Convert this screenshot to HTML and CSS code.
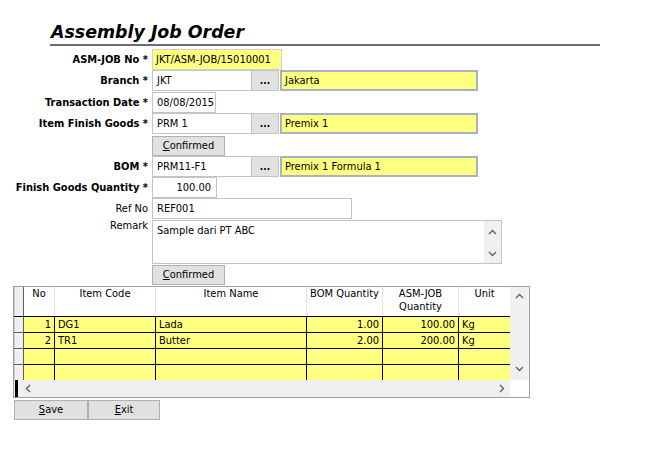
FILE: index.html
```html
<!DOCTYPE html>
<html>
<head>
<meta charset="utf-8">
<link rel="stylesheet" href="styles.css">
</head>
<body>
<div class="page">
  <h1 class="title">Assembly Job Order</h1>
  <div class="form">
    <div class="row">
      <label class="lbl req">ASM-JOB No *</label>
      <div class="in yellow plain w130">JKT/ASM-JOB/15010001</div>
    </div>
    <div class="row">
      <label class="lbl req">Branch *</label>
      <div class="in w100">JKT</div>
      <div class="dots">...</div>
      <div class="in ro w198">Jakarta</div>
    </div>
    <div class="row">
      <label class="lbl req">Transaction Date *</label>
      <div class="in w64">08/08/2015</div>
    </div>
    <div class="row">
      <label class="lbl req">Item Finish Goods *</label>
      <div class="in w100">PRM 1</div>
      <div class="dots">...</div>
      <div class="in ro w198">Premix 1</div>
    </div>
    <div class="row short">
      <span class="lbl"></span>
      <div class="btn w73"><u>C</u>onfirmed</div>
    </div>
    <div class="row">
      <label class="lbl req">BOM *</label>
      <div class="in w100">PRM11-F1</div>
      <div class="dots">...</div>
      <div class="in ro w198">Premix 1 Formula 1</div>
    </div>
    <div class="row">
      <label class="lbl req">Finish Goods Quantity *</label>
      <div class="in w65 num">100.00</div>
    </div>
    <div class="row">
      <label class="lbl">Ref No</label>
      <div class="in w200">REF001</div>
    </div>
    <div class="row top">
      <label class="lbl">Remark</label>
      <div class="area">
        <div class="area-text">Sample dari PT ABC</div>
        <div class="area-bar">
          <svg width="9" height="6" viewBox="0 0 9 6"><path d="M1 5 L4.5 1.5 L8 5" fill="none" stroke="#606060" stroke-width="1.4"/></svg>
          <svg width="9" height="6" viewBox="0 0 9 6"><path d="M1 1 L4.5 4.5 L8 1" fill="none" stroke="#606060" stroke-width="1.4"/></svg>
        </div>
      </div>
    </div>
    <div class="row">
      <span class="lbl"></span>
      <div class="btn w73"><u>C</u>onfirmed</div>
    </div>
  </div>

  <div class="grid">
    <div class="grid-body">
      <table class="tbl">
        <colgroup>
          <col style="width:9px"><col style="width:31px"><col style="width:101px"><col style="width:151px"><col style="width:76px"><col style="width:76px"><col style="width:52px">
        </colgroup>
        <thead>
          <tr><th class="ind"></th><th>No</th><th>Item Code</th><th>Item Name</th><th>BOM Quantity</th><th>ASM-JOB<br>Quantity</th><th>Unit</th></tr>
        </thead>
        <tbody>
          <tr><td class="ind"></td><td class="r">1</td><td>DG1</td><td>Lada</td><td class="r">1.00</td><td class="r">100.00</td><td>Kg</td></tr>
          <tr><td class="ind"></td><td class="r">2</td><td>TR1</td><td>Butter</td><td class="r">2.00</td><td class="r">200.00</td><td>Kg</td></tr>
          <tr><td class="ind"></td><td></td><td></td><td></td><td></td><td></td><td></td></tr>
          <tr><td class="ind"></td><td></td><td></td><td></td><td></td><td></td><td></td></tr>
        </tbody>
      </table>
    </div>
    <div class="vbar">
      <svg width="9" height="6" viewBox="0 0 9 6"><path d="M1 5 L4.5 1.5 L8 5" fill="none" stroke="#606060" stroke-width="1.4"/></svg>
      <svg width="9" height="6" viewBox="0 0 9 6"><path d="M1 1 L4.5 4.5 L8 1" fill="none" stroke="#606060" stroke-width="1.4"/></svg>
    </div>
    <div class="hbar">
      <span class="blk"></span>
      <svg width="6" height="9" viewBox="0 0 6 9"><path d="M5 1 L1.5 4.5 L5 8" fill="none" stroke="#606060" stroke-width="1.4"/></svg>
      <span class="fill"></span>
      <svg width="6" height="9" viewBox="0 0 6 9"><path d="M1 1 L4.5 4.5 L1 8" fill="none" stroke="#606060" stroke-width="1.4"/></svg>
    </div>
    <div class="corner"></div>
  </div>

  <div class="actions">
    <div class="btn w74"><u>S</u>ave</div>
    <div class="btn w72"><u>E</u>xit</div>
  </div>
</div>
</body>
</html>
```

FILE: styles.css
```css
html, body {
  margin: 0;
  padding: 0;
  background: #ffffff;
}
body {
  font-family: "DejaVu Sans Condensed", "DejaVu Sans", sans-serif;
  font-size: 11px;
  color: #000;
}
.page {
  padding-top: 20px;
}
.title {
  margin: 0 0 0 50px;
  width: 550px;
  font-family: "DejaVu Sans", sans-serif;
  font-weight: bold;
  font-style: italic;
  font-size: 17.4px;
  line-height: 24px;
  height: 26px;
  border-bottom: 2px solid #6d6d6d;
  box-sizing: border-box;
  padding-left: 1px;
}
.form {
  margin-top: 3px;
}
.row {
  display: flex;
  align-items: center;
  height: 21px;
  margin-bottom: 0.4px;
}
.row.short {
  height: 20px;
  margin-bottom: 0;
  align-items: flex-start;
  padding-top: 1px;
  box-sizing: content-box;
}
.row.top {
  align-items: flex-start;
  height: auto;
}
.lbl {
  width: 152px;
  flex: none;
  text-align: right;
  padding-right: 4px;
  box-sizing: border-box;
  line-height: 21px;
}
.lbl.req {
  font-weight: bold;
}
.row.top .lbl {
  line-height: 12px;
  padding-top: 0;
}
.in {
  height: 21px;
  box-sizing: border-box;
  border: 1px solid #c4c4c4;
  background: #fff;
  padding: 0 4px;
  line-height: 19px;
  white-space: nowrap;
  overflow: hidden;
  flex: none;
}
.in.yellow { background: #ffff80; border-color: #d0d0d0; padding-left: 3px; }
.in.ro {
  background: #ffff80;
  border: 2px solid #a6b0c8;
  line-height: 17px;
  padding-left: 3px;
  margin-left: 1px;
}
.in.num { text-align: right; padding-right: 5px; }
.w130 { width: 130px; }
.w100 { width: 100px; }
.w198 { width: 198px; }
.w64 { width: 64px; }
.w65 { width: 65px; }
.w200 { width: 200px; }
.dots {
  width: 27px;
  height: 21px;
  box-sizing: border-box;
  background: #e1e1e1;
  border: 1px solid #c4c4c4;
  border-left: none;
  text-align: center;
  font-weight: bold;
  font-size: 10px;
  line-height: 19px;
  flex: none;
}
.btn {
  height: 20px;
  box-sizing: border-box;
  background: #e1e1e1;
  border: 1px solid #b0b0b0;
  text-align: center;
  line-height: 18px;
  flex: none;
}
.w73 { width: 73px; }
.w74 { width: 74px; }
.w72 { width: 72px; }
.area {
  width: 350px;
  height: 44px;
  box-sizing: border-box;
  border: 1px solid #c4c4c4;
  display: flex;
  flex: none;
}
.area-text {
  flex: 1;
  padding: 3px 4px;
}
.area-bar {
  width: 17px;
  background: #f0f0f0;
  display: flex;
  flex-direction: column;
  justify-content: space-between;
  align-items: center;
  padding: 8px 0 6px;
  box-sizing: border-box;
}
.grid {
  margin: 0 0 0 13px;
  width: 517px;
  height: 112px;
  box-sizing: border-box;
  border: 1px solid #a0a0a0;
  display: grid;
  grid-template-columns: 1fr 19px;
  grid-template-rows: 1fr 17px;
}
.grid-body {
  overflow: hidden;
}
.tbl {
  border-collapse: collapse;
  table-layout: fixed;
  width: 496px;
  margin-top: -1px;
}
.tbl th {
  height: 29px;
  vertical-align: top;
  font-weight: normal;
  text-align: center;
  padding: 1px 2px 0;
  line-height: 13px;
  background: #fff;
  border-right: 1px solid #e4e4e4;
  border-bottom: 1px solid #000;
  white-space: nowrap;
  overflow: hidden;
}
.tbl th.ind {
  background: #f0f0f0;
  border-right: 1px solid #606060;
  border-left: 1px solid #d0d0d0;
}
.tbl td {
  height: 15px;
  padding: 0 3px;
  line-height: 15px;
  background: #ffff80;
  border: 1px solid #000;
  white-space: nowrap;
  overflow: hidden;
}
.tbl td.ind {
  background: #f0f0f0;
  border-color: #606060;
  border-left: 1px solid #d0d0d0;
}
.tbl td.r { text-align: right; }
.vbar {
  grid-row: 1;
  grid-column: 2;
  background: #f0f0f0;
  display: flex;
  flex-direction: column;
  justify-content: space-between;
  align-items: center;
  padding: 6px 0 8px;
  box-sizing: border-box;
}
.hbar {
  grid-row: 2;
  grid-column: 1;
  background: #f0f0f0;
  display: flex;
  align-items: center;
  padding-right: 5px;
}
.hbar .blk {
  width: 3px;
  align-self: stretch;
  background: #000;
  margin-left: 1px;
  margin-right: 7px;
}
.hbar .fill { flex: 1; }
.corner {
  grid-row: 2;
  grid-column: 2;
  background: #fff;
}
.actions {
  display: flex;
  margin: 2px 0 0 14px;
}
```
